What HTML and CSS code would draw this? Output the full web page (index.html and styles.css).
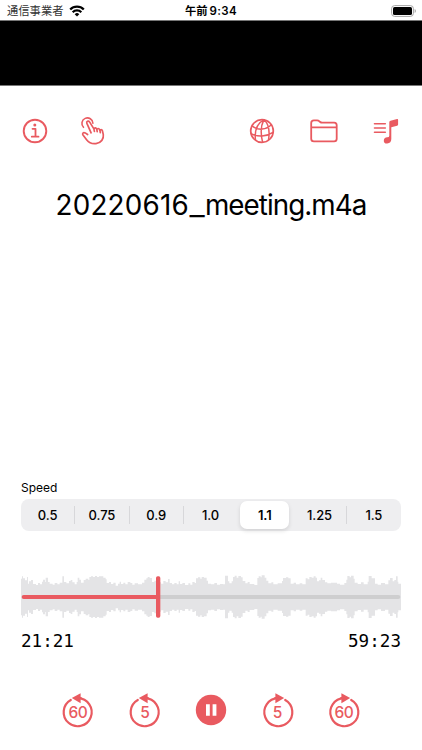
FILE: index.html
```html
<!DOCTYPE html>
<html lang="ja">
<head>
<meta charset="utf-8">
<meta name="viewport" content="width=device-width">
<title>Player</title>
<link rel="stylesheet" href="styles.css">
</head>
<body>
<div class="app">
  <header class="status">
    <div class="carrier"><span>通信事業者</span>
      <svg width="16" height="12" viewBox="0 0 16 12"><g fill="none" stroke="#000" stroke-width="2.3"><path d="M1.2 4.5a9.6 9.6 0 0 1 13.6 0"/><path d="M3.7 7.2a6.1 6.1 0 0 1 8.6 0"/></g><path d="M8 11.6 5.7 9.2a3.3 3.3 0 0 1 4.6 0z"/></svg>
    </div>
    <div class="clock"><span class="ampm">午前</span>9:34</div>
    <svg class="battery" width="25" height="12" viewBox="0 0 25 12"><rect x=".6" y=".6" width="21.8" height="10.8" rx="3" fill="#fff" stroke="#a5a5a5"/><rect x="2" y="2" width="19" height="8" rx="1.6"/><path d="M23.7 4v4q1.1-.5 1.1-2t-1.1-2" fill="#999"/></svg>
  </header>
  <div class="banner"></div>
  <nav class="toolbar">
    <svg width="26" height="26" viewBox="0 0 26 26" class="line"><circle cx="13" cy="13" r="11.3" stroke-width="1.9"/><path d="M10.5 10.8h3v7.7M9.8 18.7h6.7" stroke-width="1.8"/><circle cx="12.8" cy="7.1" r="1.5" class="fill"/></svg>
    <svg width="26" height="30" viewBox="0 0 26 30" class="line hand"><path stroke-width="1.6" d="M3.5 11.3A5.5 5.5 0 1 1 12.9 7.2"/><path stroke-width="1.7" d="M7.6 18.5 5.2 16.9c-1.9-1.1-3.2.6-2.2 2.1l3.8 5c2.5 3.2 5.6 4.1 9.2 3.6 5.3-.8 7.9-4.8 7.3-9l-.9-3.9c-.4-1.6-2.3-1.5-2.4 0l.3 2M20 15l-.4-1.3c-.5-1.7-2.7-1.5-2.7.2l.3 1.8M16.9 13.7l-.3-.8c-.5-1.5-2.6-1.3-2.6.4l.4 2.1M13.9 12.9 9.7 6.1C8.4 4.1 6 5.2 6.9 7.4l4.2 9.4"/></svg>
    <svg width="26" height="26" viewBox="0 0 26 26" class="line globe"><circle cx="13" cy="13" r="11.3" stroke-width="1.7"/><path stroke-width="1.5" d="M14.8 1.8C9.5 4.5 5.4 11 6.4 21.6M14.8 1.8c-2.6 5-3.6 12.5-1.2 22.3M15 1.8c4.6 4 6 10.4 4.6 19.6M3.2 8.2C9 12.6 17.5 12 22.2 6.8M2 15.6c6.5 3.6 15.5 3.2 22-1.2"/></svg>
    <svg width="28" height="24" viewBox="0 0 28 24" class="line folder"><path stroke-width="1.8" d="M1.2 19.8V4.1q0-2.7 2.7-2.7h3.2q1.3 0 2.1.8l1 .8q.8.7 2 .7h12q2.5 0 2.5 2.6v13.5q0 2.6-2.6 2.6H3.9q-2.7 0-2.7-2.6zM1.2 8.3h25.5"/></svg>
    <svg width="26" height="26" viewBox="0 0 26 26" class="line music"><path stroke-width="1.6" d="M1.5 5.7h10.8M1.5 10h10.8M1.5 14.3h10.8"/><path class="fill" d="M16.3 4.3q0-1.2 1.2-1.5l6.6-1.7q1-.2 1 .8v4.6q0 1-1 1.3l-5.8 1.5v11.8q0 4.1-4.1 4.4-3.4.2-3.4-2.8 0-3.4 3.5-3.5 2 0 2-1.5z"/></svg>
  </nav>
  <h1 class="title"><span class="date">20220616</span><span class="underscore">_</span><span class="name">meeting.m4a</span></h1>
  <section class="speed">
    <div class="label">Speed</div>
    <div class="segments">
      <span>0.5</span><span>0.75</span><span>0.9</span><span>1.0</span><span class="active">1.1</span><span>1.25</span><span>1.5</span>
    </div>
  </section>
  <section class="timeline">
    <svg class="wave" width="380" height="46" viewBox="0 0 1140 138">
      <defs><path id="half" d="M0 69V14H3V7H6V13H12V19H18V9H21V29H24V22H30V18H36V30H45V33H51V27H57V31H63V23H66V17H72V24H74V11H81V24H86V29H95V32H101V27H109V31H116V26H124V7H129V24H136V28H144V21H149V18H154V25H161V31H167V24H170V11H175V17H180V26H188V18H194V14H202V18H205V9H210V7H216V9H222V6H228V9H234V7H247V11H254V16H257V27H264V24H270V30H277V26H284V35H291V29H296V23H300V30H307V26H313V31H320V24H328V27H334V32H341V28H351V31H363V26H370V17H376V13H380V9H386V12H393V24H400V20H405V15H414V25H420V29H427V21H434V25H441V15H446V27H453V31H460V27H467V31H473V22H477V30H484V27H492V33H502V28H508V32H514V24H521V27H525V13H531V10H538V14H542V9H549V11H557V20H561V29H570V31H580V27H588V32H597V30H606V31H612V5H621V22H625V28H632V22H636V9H641V5H647V11H652V6H660V10H665V21H673V28H680V24H686V30H700V33H709V12H713V7H719V10H722V4H731V11H736V20H742V28H751V25H757V31H770V28H783V21H786V12H795V10H802V13H809V29H818V26H825V31H836V28H844V31H854V13H860V16H865V9H872V11H878V7H884V11H888V22H894V19H899V11H904V18H912V25H919V28H930V26H948V29H957V32H970V27H976V17H979V6H986V10H990V5H998V14H1001V26H1010V30H1020V25H1028V31H1040V23H1043V6H1052V13H1062V29H1070V32H1080V27H1092V31H1102V19H1107V12H1115V22H1120V18H1125V7H1130V23H1132V29H1140V69z"/></defs>
      <g fill="#e4e4e6"><use href="#half"/><use href="#half" transform="matrix(1 0 0 -1 0 138)"/></g>
      <path d="M409 69H1132" stroke="#cececf" stroke-width="12" stroke-linecap="round"/>
      <path d="M8 69H411" stroke="#e95a60" stroke-width="12" stroke-linecap="round"/>
      <rect x="405" y="7" width="13" height="124" rx="5" fill="#e95a60"/>
    </svg>
    <div class="times"><span>21:21</span><span>59:23</span></div>
  </section>
  <footer class="controls">
    <svg class="skip" viewBox="0 0 32 36"><path class="ring" d="M8.8 10A14 14 0 1 0 16 8.2h3"/><path class="fill" d="M9.8 8 18.6 3.2v10z"/><text x="16" y="27.8" class="sixty">60</text></svg>
    <svg class="skip" viewBox="0 0 32 36"><path class="ring" d="M8.8 10A14 14 0 1 0 16 8.2h3"/><path class="fill" d="M9.8 8 18.6 3.2v10z"/><text x="16" y="27.8">5</text></svg>
    <svg class="pause" width="32" height="32" viewBox="0 0 32 32"><circle cx="16" cy="16" r="15.2" class="fill"/><path d="M11 10.3h3.8v11.5H11zM17.6 10.3h3.8v11.5h-3.8z" fill="#fff"/></svg>
    <svg class="skip" viewBox="0 0 32 36"><path class="ring" d="M23.2 10A14 14 0 1 1 16 8.2h-3"/><path class="fill" d="M22.2 8 13.4 3.2v10z"/><text x="15.5" y="27.8">5</text></svg>
    <svg class="skip" viewBox="0 0 32 36"><path class="ring" d="M23.2 10A14 14 0 1 1 16 8.2h-3"/><path class="fill" d="M22.2 8 13.4 3.2v10z"/><text x="16" y="27.8" class="sixty">60</text></svg>
  </footer>
</div>
</body>
</html>
```
FILE: styles.css
```css
* { box-sizing: border-box; }
body { margin: 0; background: #fff; color: #000; font-family: Inter, "Noto Sans CJK JP", sans-serif; }
svg { display: block; flex: none; }
.app { width: 422px; height: 750px; display: flex; flex-direction: column; overflow: hidden; }
.status { height: 20px; padding: 0 6px 0 7px; display: grid; grid-template-columns: 1fr auto 1fr; align-items: center; line-height: 20px; }
.carrier { display: flex; align-items: center; gap: 5px; font-size: 11.3px; color: #333; }
.clock { display: flex; align-items: center; gap: 2px; font-size: 11.5px; font-weight: 600; letter-spacing: .4px; padding-top: 1px; margin-right: 1px; }
.ampm { font-family: "Noto Sans CJK JP", sans-serif; font-weight: 700; font-size: 11.3px; letter-spacing: 0; margin-top: -2px; }
.battery { justify-self: end; }
.banner { height: 66px; background: #000; border-top: 1px solid #777; border-bottom: 1px solid #777; }
.toolbar { height: 90px; padding: 0 23px 0 22px; display: flex; align-items: center; }
.line { fill: none; stroke: #e95a60; stroke-linecap: round; stroke-linejoin: round; }
.fill { fill: #e95a60; stroke: none; }
.hand { margin-left: 32px; }
.globe { margin-left: auto; }
.folder { margin-left: 35px; }
.music { margin-left: 35px; }
.title { margin: 8px 0 0; height: 42px; line-height: 42px; display: flex; justify-content: center; font-size: 27.8px; font-weight: 400; white-space: nowrap; }
.date { letter-spacing: .2px; }
.underscore { width: 16px; text-align: center; transform: scaleX(1.2); }
.name { letter-spacing: -.95px; }
.speed { margin: 254px 21px 0; }
.label { height: 19px; line-height: 16px; font-size: 12px; }
.segments { height: 32px; padding: 2px 0; border-radius: 8px; background: #eeeef0; display: grid; grid-template-columns: repeat(7, 1fr); }
.segments span { display: flex; align-items: center; justify-content: center; font-size: 13px; font-weight: 500; letter-spacing: -.1px; padding-right: 1px; background: linear-gradient(#d7d7da, #d7d7da) right center / 1px 18px no-repeat; }
.segments span:nth-child(4), .segments span:last-child { background: none; }
.segments span:nth-child(n+6) { padding: 0; }
.segments .active { margin: 0 3px 0 2px; padding: 0; border-radius: 7px; background: #fff; font-weight: 600; box-shadow: 0 2px 4px rgba(0,0,0,.12); }
.timeline { margin: 43px 21px 0; }
.times { margin-top: 9px; display: flex; justify-content: space-between; font: 17.6px/24px "DejaVu Sans Mono", monospace; }
.controls { margin: 38px 62px 0; height: 36px; display: flex; justify-content: space-between; align-items: flex-start; }
.skip { width: 32px; height: 36px; margin-top: -1px; overflow: visible; }
.pause { margin-top: 3px; }
.ring { fill: none; stroke: #e95a60; stroke-width: 2.2; stroke-linecap: round; }
.skip text { fill: #e95a60; font: 500 15.5px Inter, sans-serif; text-anchor: middle; }
.skip .sixty { letter-spacing: -.5px; }
```
